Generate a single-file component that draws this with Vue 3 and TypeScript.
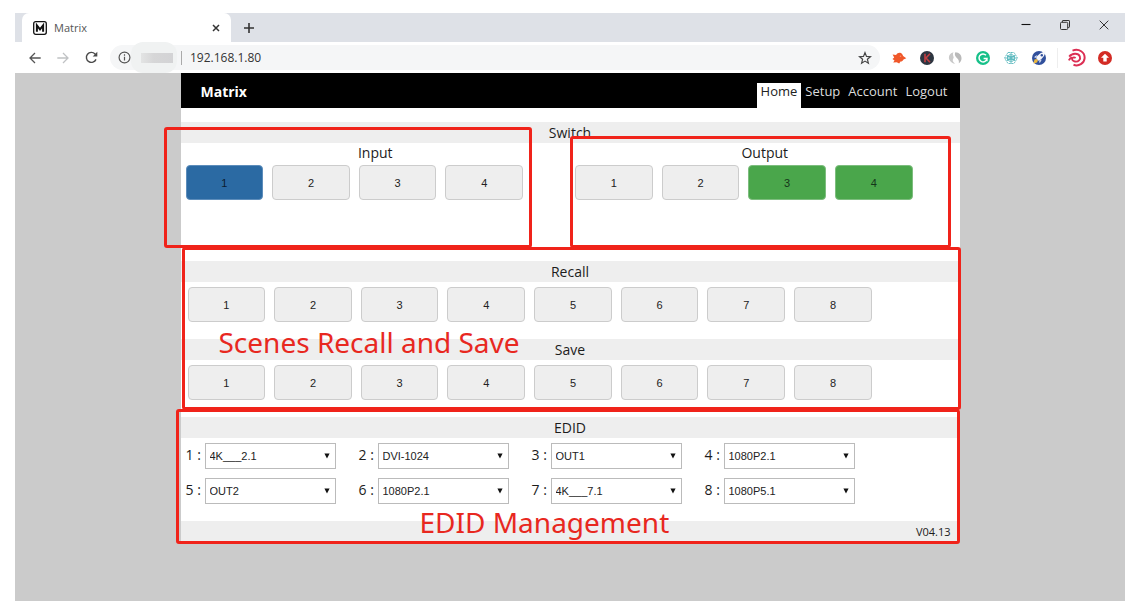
<script setup lang="ts">
import { reactive, ref } from 'vue'

interface EdidSlot {
  id: number
  value: string
}

const navItems = ['Home', 'Setup', 'Account', 'Logout']
const activeNav = ref('Home')
const address = ref('192.168.1.80')

const ports = [1, 2, 3, 4]
const scenes = [1, 2, 3, 4, 5, 6, 7, 8]
const selectedInput = ref(1)
const selectedOutputs = ref<number[]>([3, 4])

const edidOptions = ['4K___2.1', 'DVI-1024', 'OUT1', '1080P2.1', 'OUT2', '4K___7.1', '1080P5.1']
const edidSlots = reactive<EdidSlot[]>([
  { id: 1, value: '4K___2.1' },
  { id: 2, value: 'DVI-1024' },
  { id: 3, value: 'OUT1' },
  { id: 4, value: '1080P2.1' },
  { id: 5, value: 'OUT2' },
  { id: 6, value: '1080P2.1' },
  { id: 7, value: '4K___7.1' },
  { id: 8, value: '1080P5.1' },
])

function toggleOutput(n: number): void {
  selectedOutputs.value = selectedOutputs.value.includes(n)
    ? selectedOutputs.value.filter((o) => o !== n)
    : [...selectedOutputs.value, n]
}
</script>

<template>
  <div class="desktop">
    <div class="browser">
      <div class="tabstrip">
        <div class="tab">
          <svg class="favicon" viewBox="0 0 14 14" aria-hidden="true">
            <rect x="0.7" y="0.7" width="12.6" height="12.6" rx="2" fill="#fff" stroke="#111" stroke-width="1.3" />
            <path d="M3.9 10.8V4.4L7 8.4l3.1-4v6.4" fill="none" stroke="#111" stroke-width="2" />
          </svg>
          <span class="tab-title">Matrix</span>
          <button class="icon-button" type="button" aria-label="Close tab">
            <svg width="8" height="8" viewBox="0 0 8 8"><path d="M1 1l6 6M7 1L1 7" stroke="#333" stroke-width="1.5" /></svg>
          </button>
        </div>
        <button class="icon-button new-tab" type="button" aria-label="New tab">
          <svg width="12" height="12" viewBox="0 0 12 12"><path d="M6 1v10M1 6h10" stroke="#333" stroke-width="1.6" /></svg>
        </button>
        <div class="window-controls">
          <button class="icon-button" type="button" aria-label="Minimize">
            <svg width="10" height="10" viewBox="0 0 10 10"><path d="M0.5 4.5h9" stroke="#111" stroke-width="1.1" /></svg>
          </button>
          <button class="icon-button" type="button" aria-label="Restore">
            <svg width="10" height="10" viewBox="0 0 10 10" fill="none" stroke="#333">
              <rect x="0.5" y="2.3" width="7.2" height="7.2" rx="1" />
              <path d="M2.4 2.3V1q0-.5.5-.5h6q.6 0 .6.6v5.7q0 .6-.6.6H7.7" />
            </svg>
          </button>
          <button class="icon-button" type="button" aria-label="Close window">
            <svg width="10" height="10" viewBox="0 0 10 10"><path d="M.7.7l8.6 8.6M9.3.7L.7 9.3" stroke="#333" stroke-width="1" /></svg>
          </button>
        </div>
      </div>

      <div class="toolbar">
        <div class="history">
          <button class="icon-button" type="button" aria-label="Back">
            <svg width="12" height="12" viewBox="0 0 12 12" fill="none" stroke="#555" stroke-width="1.3"><path d="M11.7 6H1M6 1L1 6l5 5" /></svg>
          </button>
          <button class="icon-button" type="button" aria-label="Forward">
            <svg width="12" height="12" viewBox="0 0 12 12" fill="none" stroke="#c0c2c4" stroke-width="1.3"><path d="M.3 6H11M6 1l5 5-5 5" /></svg>
          </button>
          <button class="icon-button" type="button" aria-label="Reload">
            <svg width="13" height="13" viewBox="0 0 13 13"><path d="M11 8.4A5 5 0 1 1 10 2.9l1 1.2" fill="none" stroke="#4a4a4a" stroke-width="1.4" /><path d="M12.3.8v4.6H7.7z" fill="#4a4a4a" /></svg>
          </button>
        </div>

        <div class="addressbar">
          <svg class="info" viewBox="0 0 12 12" fill="none" stroke="#555" stroke-width="1.1"><circle cx="6" cy="6" r="5" /><path d="M6 5.2v3.6M6 3.1v1.3" /></svg>
          <span class="smudge" aria-hidden="true"><span class="smudge-core"></span></span>
          <span class="address-divider"></span>
          <input v-model="address" class="address-input" type="text" aria-label="Address" />
          <button class="icon-button" type="button" aria-label="Bookmark">
            <svg width="14" height="14" viewBox="0 0 14 14"><path d="M7 1.6l1.5 3.8 4 .3-3.1 2.6 1 3.9L7 10.1l-3.4 2.1 1-3.9-3.1-2.6 4-.3z" fill="none" stroke="#444" stroke-width="1.2" /></svg>
          </button>
        </div>

        <div class="extensions">
          <svg viewBox="0 0 18 18"><path d="M2.6 5.5l3.5.4C7.200 4.200 9 3.300 10.800 4c1.300.5 1.800 1.700 2.300 3l3.200 2.200-2.800 1.200c-.5 1.300-1.600 2-3 2.200l-1.300 2-2.500-1.300-3.500.3 1.300-2L2.500 10l1.700-1.500z" fill="#f0582a" /><circle cx="10.500" cy="7.300" r=".8" fill="#f7926f" /></svg>
          <svg viewBox="0 0 18 18"><circle cx="9" cy="9" r="7" fill="#2d3540" /><path d="M7 4.800v8.400M12 4.800L8 9l4 4.200" fill="none" stroke="#c23f42" stroke-width="1.600" /></svg>
          <svg viewBox="0 0 18 18"><path d="M7.500 3.200C3.800 4 2 7.500 3.400 10.700c1 2.400 3.300 3.900 5.900 3.900-1.800-1.200-3-2.600-2.400-4.100.3-1 1-1.200.7-2.500-.3-1.600-1.300-2.800-.1-4.800z" fill="#c9c9c9" /><path d="M9.300 3.200c4 .1 6.600 3.200 6.200 6.700-.2 1.900-1.200 3.500-2.700 4.400.5-2.100-.2-3.500-1.700-5C9.500 7.700 8 5.600 9.300 3.200z" fill="#b9b9b9" /></svg>
          <svg viewBox="0 0 18 18"><circle cx="9" cy="9" r="7" fill="#17c089" /><path d="M12 6.200A4 4 0 1 0 13 9.500H9.600M12.900 9.200v3" fill="none" stroke="#fff" stroke-width="1.500" /></svg>
          <svg viewBox="0 0 18 18" fill="none" stroke="#58b8bd" stroke-width=".9"><path d="M6 3.500h6l3.500 5.500-3.500 5.500H6L2.500 9z" stroke-dasharray="2 .8" /><path d="M7.200 5.800h3.600L12.800 9l-2 3.200H7.200L5.200 9zM9 3v12M3 9h12M4.700 6l8.600 6M13.300 6l-8.600 6M5 7.500h8M5 10.500h8" /></svg>
          <svg viewBox="0 0 18 18"><circle cx="9" cy="9" r="7" fill="#31509c" /><path d="M6.200 9.300l1-2.400 3.200-2.700L15.800 2l-1.800 5.100-3 3.500-2.800 1.200z" fill="#f6f7fb" /><path d="M6.800 6L4 8.200l2.500.8zM9 11.500l.7 2.800 2-3.600z" fill="#dfe4f1" /><circle cx="11.800" cy="6.200" r="1.200" fill="#31509c" /><path d="M3.500 14.500l1-3.900 2.200-.5 1.200 1.400-.9 2z" fill="#edb93f" /></svg>
        </div>
        <div class="profile">
          <svg viewBox="0 0 20 20" fill="none" stroke="#dc2f54"><path d="M5.500 2.600C12 .2 18 4.200 17.600 10.200 17.200 15.500 11.700 18.700 6.500 16.800" stroke-width="2" /><path d="M2.200 8.600c2.800-3.600 9-3.900 10.600-.3 1.300 3.200-1.600 5.800-4.800 5.200-2.200-.4-3.400-1.900-2.700-3.200.6-1.100 2.200-1.200 3.300-.4" stroke-width="1.900" /><path d="M1.800 12.300c.8-1.600 2-2.500 3.500-2.800" stroke-width="1.800" /></svg>
          <svg viewBox="0 0 20 20"><circle cx="10" cy="10" r="7" fill="#d32b25" /><path d="M10 5.800l4 4h-2.300v3.600H8.300V9.800H6z" fill="#fff" /></svg>
        </div>
      </div>

      <div class="viewport">
        <main class="panel">
          <header class="panel-header">
            <h1>Matrix</h1>
            <nav>
              <a v-for="item in navItems" :key="item" href="#" :class="{ active: item === activeNav }" @click.prevent="activeNav = item">{{ item }}</a>
            </nav>
          </header>

          <section class="switch">
            <h2>Switch</h2>
            <div class="switch-halves">
              <div class="half">
                <h3>Input</h3>
                <div class="ports">
                  <button v-for="n in ports" :key="n" type="button" class="key" :class="{ blue: n === selectedInput }" @click="selectedInput = n">{{ n }}</button>
                </div>
                <div class="callout callout-input"></div>
              </div>
              <div class="half">
                <h3>Output</h3>
                <div class="ports">
                  <button v-for="n in ports" :key="n" type="button" class="key" :class="{ green: selectedOutputs.includes(n) }" @click="toggleOutput(n)">{{ n }}</button>
                </div>
                <div class="callout callout-output"></div>
              </div>
            </div>
          </section>

          <section class="scenes">
            <h2>Recall</h2>
            <div class="scene-keys">
              <button v-for="n in scenes" :key="n" type="button" class="key">{{ n }}</button>
            </div>
            <h2>Save</h2>
            <div class="scene-keys">
              <button v-for="n in scenes" :key="n" type="button" class="key">{{ n }}</button>
            </div>
            <div class="callout callout-scenes"></div>
            <p class="note note-scenes">Scenes Recall and Save</p>
          </section>

          <section class="edid">
            <h2>EDID</h2>
            <div class="edid-grid">
              <div v-for="slot in edidSlots" :key="slot.id" class="edid-slot">
                <label :for="`edid-${slot.id}`">{{ slot.id }} :</label>
                <div class="select-wrap">
                  <select :id="`edid-${slot.id}`" v-model="slot.value">
                    <option v-for="option in edidOptions" :key="option" :value="option">{{ option }}</option>
                  </select>
                  <svg class="caret" viewBox="0 0 6 6" aria-hidden="true"><path d="M.4.5h5.2L3 5.6z" fill="#111" /></svg>
                </div>
              </div>
            </div>
            <footer>V04.13</footer>
            <div class="callout callout-edid"></div>
            <p class="note note-edid">EDID Management</p>
          </section>
        </main>
      </div>
    </div>
  </div>
</template>

<style>
body {
  margin: 0;
  background: #fff;
}
</style>

<style scoped>
* {
  box-sizing: border-box;
}

.desktop {
  display: flex;
  min-height: 100vh;
  padding: 13px 15px 7px;
  font-family: "Open Sans", "Noto Sans", sans-serif;
  color: #1c1c1c;
}

.browser {
  flex: 1;
  display: flex;
  flex-direction: column;
  min-width: 0;
}

.icon-button {
  display: flex;
  align-items: center;
  justify-content: center;
  width: 16px;
  height: 16px;
  padding: 0;
  border: 0;
  background: none;
}

.tabstrip {
  display: flex;
  align-items: center;
  height: 29px;
  padding: 0 2px 0 7px;
  background: #dee1e7;
}

.tab {
  display: flex;
  align-items: center;
  gap: 7px;
  width: 209px;
  height: 29px;
  padding: 0 7px 0 11px;
  border-radius: 7px 7px 0 0;
  background: #fff;
}

.favicon {
  width: 14px;
  height: 14px;
}

.tab-title {
  flex: 1;
  font-size: 11px;
  color: #555;
}

.new-tab {
  margin-left: 10px;
}

.window-controls {
  display: flex;
  margin-left: auto;
  margin-bottom: 5px;
}

.window-controls .icon-button {
  width: 39px;
}

.toolbar {
  display: flex;
  align-items: center;
  height: 31px;
  padding: 0 10px 0 12px;
  background: #fff;
}

.history {
  display: flex;
  gap: 12px;
}

.addressbar {
  flex: 1;
  display: flex;
  align-items: center;
  height: 25px;
  margin: 0 10px 0 11px;
  padding: 0 7px 0 8px;
  border-radius: 13px;
  background: #f5f6f7;
}

.info {
  width: 13px;
  height: 13px;
}

.smudge {
  display: flex;
  align-items: center;
  justify-content: center;
  width: 46px;
  height: 31px;
  border-radius: 12px;
  background: #f0f2f2;
}

.smudge-core {
  width: 32px;
  height: 10px;
  margin-left: 6px;
  background: linear-gradient(90deg, #e3e4e4, #d6d6d7 40%, #d3d3d5);
}

.address-divider {
  width: 1px;
  height: 14px;
  margin: 0 8px 0 4px;
  background: #aaa;
}

.address-input {
  flex: 1;
  min-width: 0;
  padding: 0;
  border: 0;
  outline: 0;
  background: none;
  font: 12px/20px "Open Sans", "Noto Sans", sans-serif;
  color: #333;
}

.extensions {
  display: flex;
  gap: 10px;
}

.extensions svg {
  width: 18px;
  height: 18px;
}

.profile {
  display: flex;
  gap: 8px;
  margin-left: 9px;
  padding-left: 9px;
  border-left: 1px solid #eee;
}

.profile svg {
  width: 20px;
  height: 20px;
}

.viewport {
  flex: 1;
  background: #cbcbcb;
}

.panel {
  width: 100%;
  max-width: 779px;
  margin: 0 auto;
  background: #fff;
}

.panel-header {
  display: flex;
  justify-content: space-between;
  align-items: flex-end;
  height: 35px;
  padding: 0 8px 0 20px;
  background: #000;
}

h1 {
  margin: 0;
  font-size: 14px;
  line-height: 33px;
  color: #fff;
}

nav {
  display: flex;
}

nav a {
  height: 25px;
  padding: 0 4px;
  font-size: 13px;
  line-height: 17px;
  color: #ddd;
  text-decoration: none;
}

nav a.active {
  background: #fff;
  color: #222;
}

h2 {
  margin: 0;
  font-size: 14px;
  font-weight: 400;
  line-height: 21px;
  text-align: center;
  background: #eee;
}

h3 {
  margin: 0;
  font-size: 14px;
  font-weight: 400;
  line-height: 20px;
  text-align: center;
}

.switch {
  padding-top: 14px;
}

.switch-halves {
  display: grid;
  grid-template-columns: 1fr 1fr;
}

.half {
  position: relative;
  padding: 0 47px 48px 5px;
}

.half h3 {
  margin: 0 -47px 2px -5px;
}

.ports {
  display: grid;
  grid-template-columns: repeat(4, 1fr);
  gap: 9px;
}

.key {
  height: 35px;
  padding: 0;
  border: 1px solid #ccc;
  border-radius: 4px;
  background: #eee;
  font: 11px "Liberation Sans", Arial, sans-serif;
  color: #222;
}

.key.blue {
  border-color: #5d8dbb;
  background: #2b6aa3;
  color: #0b1c30;
}

.key.green {
  border-color: #7dbd7e;
  background: #4aa64b;
  color: #14351a;
}

.scenes {
  position: relative;
  padding-top: 13px;
}

.scene-keys {
  display: grid;
  grid-template-columns: repeat(9, 1fr);
  gap: 9px;
  padding: 5px 1px 17px 7px;
}

.edid {
  position: relative;
}

.edid-grid {
  display: grid;
  grid-template-columns: repeat(4, 1fr);
  gap: 9px 23px;
  padding: 5px 105px 17px 5px;
}

.edid-slot {
  display: flex;
  align-items: center;
}

.edid-slot label {
  flex: none;
  width: 19px;
  font-size: 14px;
  line-height: 24px;
  padding-bottom: 2px;
  white-space: nowrap;
}

.select-wrap {
  position: relative;
  flex: 1;
}

select {
  display: block;
  width: 100%;
  height: 26px;
  padding: 0 20px 0 4px;
  border: 1px solid #bbb;
  border-radius: 0;
  appearance: none;
  background: #fff;
  font: 11px "Liberation Sans", Arial, sans-serif;
  color: #222;
}

.caret {
  position: absolute;
  top: 10px;
  right: 6px;
  width: 6px;
  height: 6px;
  pointer-events: none;
}

footer {
  padding-right: 9px;
  font-size: 11px;
  line-height: 21px;
  text-align: right;
  background: #eee;
}

.callout {
  position: absolute;
  border: 3px solid #f0231a;
  border-radius: 3px;
  pointer-events: none;
}

.callout-input {
  inset: -16px 38px 0 -17px;
}

.callout-output {
  inset: -7px 9px 0 0;
}

.callout-scenes {
  inset: -1px -1px 7px 1px;
}

.callout-edid {
  inset: -8px 0 -2px -5px;
}

.note {
  position: absolute;
  margin: 0;
  font-family: "Noto Sans", "Open Sans", sans-serif;
  font-size: 28px;
  line-height: 36px;
  white-space: nowrap;
  color: #e8281f;
  pointer-events: none;
}

.note-scenes {
  top: 76px;
  left: 38px;
}

.note-edid {
  bottom: 2px;
  left: 239px;
}
</style>
